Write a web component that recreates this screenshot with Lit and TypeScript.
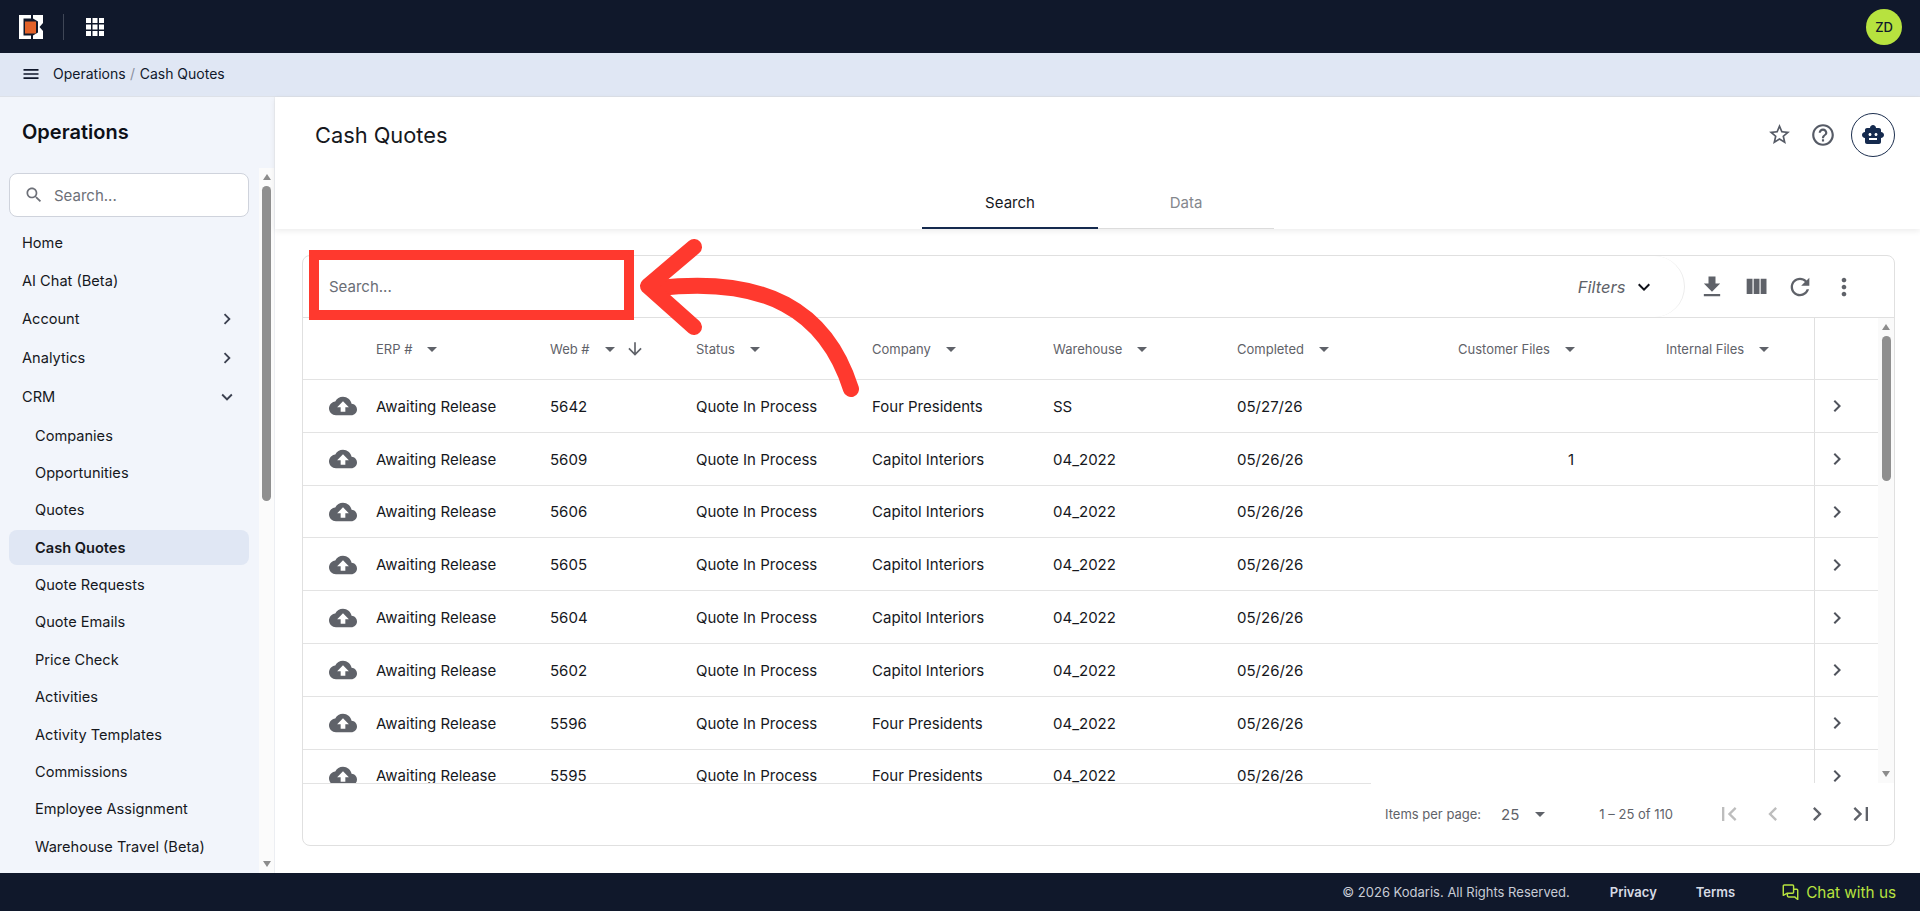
import { LitElement, html, css, svg } from "lit";
import { customElement } from "lit/decorators.js";

const P: Record<string, string> = {
  menu: "M3 18h18v-2H3v2zm0-5h18v-2H3v2zm0-7v2h18V6H3z",
  search: "M15.5 14h-.79l-.28-.27C15.41 12.59 16 11.11 16 9.5 16 5.91 13.09 3 9.5 3S3 5.91 3 9.5 5.91 16 9.5 16c1.61 0 3.09-.59 4.23-1.57l.27.28v.79l5 4.99L20.49 19l-4.99-5zm-6 0C7.01 14 5 11.99 5 9.5S7.01 5 9.5 5 14 7.01 14 9.5 11.99 14 9.5 14z",
  right: "M10 6L8.59 7.41 13.17 12l-4.58 4.59L10 18l6-6z",
  left: "M15.41 7.41L14 6l-6 6 6 6 1.41-1.41L10.83 12z",
  down: "M16.59 8.59L12 13.17 7.41 8.59 6 10l6 6 6-6z",
  star: "M22 9.24l-7.19-.62L12 2 9.19 8.63 2 9.24l5.46 4.73L5.82 21 12 17.27 18.18 21l-1.63-7.03L22 9.24zM12 15.4l-3.76 2.27 1-4.28-3.32-2.88 4.38-.38L12 6.1l1.71 4.04 4.38.38-3.32 2.88 1 4.28L12 15.4z",
  help: "M11 18h2v-2h-2v2zm1-16C6.48 2 2 6.48 2 12s4.48 10 10 10 10-4.48 10-10S17.52 2 12 2zm0 18c-4.41 0-8-3.59-8-8s3.59-8 8-8 8 3.59 8 8-3.59 8-8 8zm0-14c-2.21 0-4 1.79-4 4h2c0-1.1.9-2 2-2s2 .9 2 2c0 2-3 1.75-3 5h2c0-2.25 3-2.5 3-5 0-2.21-1.79-4-4-4z",
  robot: "M20 9V7c0-1.1-.9-2-2-2h-3c0-1.66-1.34-3-3-3S9 3.34 9 5H6c-1.1 0-2 .9-2 2v2c-1.66 0-3 1.34-3 3s1.34 3 3 3v4c0 1.1.9 2 2 2h12c1.1 0 2-.9 2-2v-4c1.66 0 3-1.34 3-3s-1.34-3-3-3zM7.5 11.5C7.5 10.67 8.17 10 9 10s1.5.67 1.5 1.5S9.83 13 9 13s-1.5-.67-1.5-1.5zM16 17H8v-2h8v2zm-1-4c-.83 0-1.5-.67-1.5-1.5S14.17 10 15 10s1.5.67 1.5 1.5S15.83 13 15 13z",
  download: "M19 9h-4V3H9v6H5l7 7 7-7zM5 18v2h14v-2H5z",
  columns: "M10 18h5V5h-5v13zm-6 0h5V5H4v13zM16 5v13h5V5h-5z",
  refresh: "M17.65 6.35C16.2 4.9 14.21 4 12 4c-4.42 0-7.99 3.58-7.99 8s3.57 8 7.99 8c3.73 0 6.84-2.55 7.73-6h-2.08c-.82 2.33-3.04 4-5.65 4-3.31 0-6-2.69-6-6s2.69-6 6-6c1.66 0 3.14.69 4.22 1.78L13 11h7V4l-2.35 2.35z",
  more: "M12 8c1.1 0 2-.9 2-2s-.9-2-2-2-2 .9-2 2 .9 2 2 2zm0 2c-1.1 0-2 .9-2 2s.9 2 2 2 2-.9 2-2-.9-2-2-2zm0 6c-1.1 0-2 .9-2 2s.9 2 2 2 2-.9 2-2-.9-2-2-2z",
  cloud: "M19.35 10.04C18.67 6.59 15.64 4 12 4 9.11 4 6.6 5.64 5.35 8.04 2.34 8.36 0 10.91 0 14c0 3.31 2.69 6 6 6h13c2.76 0 5-2.24 5-5 0-2.64-2.05-4.78-4.65-4.96zM14 13v4h-4v-4H7l5-5 5 5h-3z",
  sort: "M20 12l-1.41-1.41L13 16.17V4h-2v12.17l-5.58-5.59L4 12l8 8 8-8z",
  first: "M18.41 16.59L13.82 12l4.59-4.59L17 6l-6 6 6 6zM6 6h2v12H6z",
  last: "M5.59 7.41L10.18 12l-4.59 4.59L7 18l6-6-6-6zM16 6h2v12h-2z",
};

const icon = (n: string, size: number, cls = "") => html`<svg class=${cls} width=${size} height=${size} viewBox="0 0 24 24" fill="currentColor">${svg`<path d=${P[n]}></path>`}</svg>`;

const NAV: [string, number, string?][] = [
  ["Home", 0], ["AI Chat (Beta)", 0], ["Account", 0, "right"], ["Analytics", 0, "right"], ["CRM", 0, "down"],
  ["Companies", 1], ["Opportunities", 1], ["Quotes", 1], ["Cash Quotes", 2], ["Quote Requests", 1], ["Quote Emails", 1],
  ["Price Check", 1], ["Activities", 1], ["Activity Templates", 1], ["Commissions", 1], ["Employee Assignment", 1], ["Warehouse Travel (Beta)", 1],
];

const COLS = ["ERP #", "Web #", "Status", "Company", "Warehouse", "Completed", "Customer Files", "Internal Files"];
const ROWS: [string, string, string, string, string?][] = [
  ["5642", "Four Presidents", "SS", "05/27/26"],
  ["5609", "Capitol Interiors", "04_2022", "05/26/26", "1"],
  ["5606", "Capitol Interiors", "04_2022", "05/26/26"],
  ["5605", "Capitol Interiors", "04_2022", "05/26/26"],
  ["5604", "Capitol Interiors", "04_2022", "05/26/26"],
  ["5602", "Capitol Interiors", "04_2022", "05/26/26"],
  ["5596", "Four Presidents", "04_2022", "05/26/26"],
  ["5595", "Four Presidents", "04_2022", "05/26/26"],
];

const APP_DOTS = [0, 6.5, 13];

@customElement("app-root")
export class AppRoot extends LitElement {
  static styles = css`
    :host { display: flex; flex-direction: column; height: 100vh; overflow: hidden; position: relative; font-family: Inter, "Noto Sans", sans-serif; font-size: 14px; color: #16181d; background: #fff; }
    svg { display: block; flex: none; }
    .top { height: 53px; flex: none; background: #10182b; display: flex; align-items: center; padding: 0 18px 0 18px; }
    .logo { width: 25px; height: 24px; }
    .divider { width: 1px; height: 26px; background: #3f4656; margin: 0 22px 0 20px; }
    .apps { color: #fff; }
    .avatar { margin-left: auto; width: 36px; height: 36px; border-radius: 50%; background: #b7e23f; color: #10182b; font-size: 13px; font-weight: 500; display: flex; align-items: center; justify-content: center; }
    .crumb { height: 44px; flex: none; box-sizing: border-box; background: #e0e7f4; display: flex; align-items: center; padding: 0 0 3px 21px; box-shadow: inset 0 -1px 0 #dde1e8; color: #10182b; }
    .crumb .ham { margin-right: 12px; }
    .crumb .sep { color: #8a90a0; margin: 0 4.5px; }
    .middle { flex: 1; min-height: 0; display: flex; }
    .side { width: 275px; flex: none; display: flex; border-right: 1px solid #eceef2; box-sizing: border-box; }
    .side-main { width: 259px; flex: none; background: #f2f5fb; display: flex; flex-direction: column; overflow: hidden; }
    .side-title { font-size: 20px; font-weight: 600; color: #0d1017; padding: 22px 0 0 22px; line-height: 26px; height: 54px; flex: none; box-sizing: content-box; }
    .side-search { margin: 0 10px 0 9px; height: 44px; flex: none; box-sizing: border-box; border: 1px solid #cfd3dc; border-radius: 8px; background: #fff; display: flex; align-items: center; color: #6d7078; padding-left: 14px; gap: 10px; font-size: 15px; }
    .side-search svg { color: #6d7078; }
    .nav { padding: 7.5px 10px 0 9px; display: flex; flex-direction: column; font-size: 14.6px; }
    .nav-item { height: 37.4px; flex: none; display: flex; align-items: center; padding: 0 11px 0 13px; color: #16181d; }
    .nav-item.exp { height: 39.2px; }
    .nav-item.sub { padding-left: 26px; }
    .nav-item.active { background: #e0e7f4; border-radius: 8px; font-weight: 600; height: 35px; margin: 1.2px 0; }
    .nav-item svg { margin-left: auto; color: #3c4150; }
    .track { flex: 1; background: #fbfbfb; display: flex; flex-direction: column; align-items: center; }
    .side-track-top { flex: none; align-self: stretch; background: #f2f5fb; height: 71px; }
    .arrow-up { width: 0; height: 0; border-left: 4.5px solid transparent; border-right: 4.5px solid transparent; border-bottom: 6px solid #8c8c8c; margin: 6px 0 6px; flex: none; }
    .arrow-dn { width: 0; height: 0; border-left: 4.5px solid transparent; border-right: 4.5px solid transparent; border-top: 6px solid #8c8c8c; margin-top: auto; margin-bottom: 6px; flex: none; }
    .thumb { width: 9px; border-radius: 5px; background: #8f8f8f; flex: none; }
    .thumb.side-t { height: 315px; }
    .thumb.tbl-t { height: 145px; }
    .main { flex: 1; min-width: 0; display: flex; flex-direction: column; }
    .head { height: 132px; flex: none; position: relative; z-index: 1; background: #fff; box-shadow: 0 2px 6px rgba(0,0,0,.08); display: flex; flex-direction: column; }
    .head-top { height: 88px; flex: none; display: flex; align-items: center; padding: 0 25px 13px 40px; box-sizing: border-box; }
    .head-top h1 { margin: 0; font-size: 21.8px; font-weight: 400; color: #16181d; flex: 1; }
    .hicon { color: #565b66; margin-right: 18px; }
    .hicon.q { margin-right: 15px; }
    .bot { width: 44px; height: 44px; box-sizing: border-box; border: 1.5px solid #1d2f4f; border-radius: 50%; display: flex; align-items: center; justify-content: center; color: #152a4e; }
    .tabs { display: flex; margin-left: 647px; height: 44px; font-size: 15px; }
    .tab { width: 176px; display: flex; align-items: center; justify-content: center; border-bottom: 1px solid #dcdcdc; box-sizing: border-box; color: #84878d; padding-bottom: 9px; }
    .tab.on { color: #16181d; border-bottom: 2px solid #152a4e; padding-bottom: 8px; }
    .content { flex: 1; min-height: 0; padding: 26px 25px 27px 27px; }
    .card { height: 100%; box-sizing: border-box; border: 1px solid #e0e0e0; border-radius: 8px; display: flex; flex-direction: column; overflow: hidden; }
    .bar { height: 62px; flex: none; display: flex; align-items: center; border-bottom: 1px solid #e0e0e0; box-sizing: border-box; }
    .bar-search { width: 1382px; height: 100%; box-sizing: border-box; border-right: 1px solid #ececec; border-radius: 0 31px 31px 0; display: flex; align-items: center; padding: 0 28px 0 26px; color: #6a6e76; font-size: 15px; }
    .filters { margin-left: auto; font-style: italic; color: #5e6269; display: flex; align-items: center; gap: 6.5px; font-size: 16.5px; }
    .filters svg { color: #10121a; }
    .tools { display: flex; color: #5f6269; padding-left: 13px; gap: 16px; }
    .tbl { flex: 1; min-height: 0; display: flex; }
    .tbl-body { width: 1575px; flex: none; overflow: hidden; }
    .row { display: grid; grid-template-columns: 73px 174px 146px 176px 181px 184px 221px 208px 148px 64px; align-items: center; height: 52.8px; box-sizing: border-box; border-bottom: 1px solid #e3e3e3; font-size: 15px; }
    .row > div { display: flex; align-items: center; height: 100%; padding-top: 1px; box-sizing: border-box; }
    .row.hd { height: 62px; font-size: 13px; color: #5f6269; }
    .row .ic { justify-content: flex-end; padding-right: 19px; color: #5f6269; }
    .row .end { border-left: 1px solid #e0e0e0; padding-left: 10px; color: #50545d; }
    .caret { width: 0; height: 0; border-left: 5px solid transparent; border-right: 5px solid transparent; border-top: 5.5px solid #5f6269; margin-left: 15px; }
    .sorti { margin-left: 10px; color: #5f6269; }
    .row .cnum { padding-left: 110px; }
    .tbl-track { flex: 1; background: #fafafa; display: flex; flex-direction: column; align-items: center; }
    .pager { height: 62px; flex: none; display: flex; align-items: center; font-size: 13px; color: #5f6269; padding: 0 0 0 1082px; background: linear-gradient(#e3e3e3,#e3e3e3) 0 0/1068px 1px no-repeat; box-sizing: border-box; }
    .pager .sz { font-size: 15px; margin-left: 20px; }
    .pager .caret { margin-left: 16px; }
    .pager .range { margin-left: 54px; }
    .pager .btns { margin-left: 42px; display: flex; gap: 16px; }
    .pager .off { color: #bdbdbd; }
    .foot { height: 38px; flex: none; background: #10182b; display: flex; align-items: center; justify-content: flex-end; padding-right: 24px; color: #c8ccd6; font-size: 13px; }
    .foot b { font-weight: 600; color: #d7dbe5; }
    .foot .priv { margin-left: 40px; }
    .foot .terms { margin-left: 39px; }
    .chat { margin-left: 47px; color: #b7e23f; font-size: 15.3px; display: flex; align-items: center; gap: 7px; }
    .annot { position: absolute; left: 0; top: 0; pointer-events: none; }
  `;

  render() {
    return html`
      <div class="top">
        <svg class="logo" viewBox="0 0 25 24">
          <path fill="#fff" d="M1 0h12v3.500H5.500v17H13V24H1zM15 0H25V8L21.500 12H20V6.500L15 3.500zM15 24H25V16L21.500 12H20V17.500L15 20.500z"></path>
          <rect x="7" y="6.500" width="11" height="12" fill="#e2622a"></rect>
        </svg>
        <div class="divider"></div>
        <svg class="apps" width="18" height="18" viewBox="0 0 18 18" fill="currentColor">
          ${APP_DOTS.map((y) => APP_DOTS.map((x) => svg`<rect x=${x} y=${y} width="5" height="5"></rect>`))}
        </svg>
        <div class="avatar">ZD</div>
      </div>
      <div class="crumb">
        <span class="ham">${icon("menu", 20)}</span>
        <span>Operations</span><span class="sep">/</span><span>Cash Quotes</span>
      </div>
      <div class="middle">
        <div class="side">
          <div class="side-main">
            <div class="side-title">Operations</div>
            <div class="side-search">${icon("search", 20)}<span>Search...</span></div>
            <div class="nav">
              ${NAV.map(([t, k, ic]) => html`<div class="nav-item ${k ? "sub" : ""} ${k === 2 ? "active" : ""} ${ic ? "exp" : ""}">${t}${ic ? icon(ic, 22) : ""}</div>`)}
            </div>
          </div>
          <div class="track">
            <div class="side-track-top"></div>
            <div class="arrow-up"></div>
            <div class="thumb side-t"></div>
            <div class="arrow-dn"></div>
          </div>
        </div>
        <div class="main">
          <div class="head">
            <div class="head-top">
              <h1>Cash Quotes</h1>
              <span class="hicon">${icon("star", 25)}</span>
              <span class="hicon q">${icon("help", 26)}</span>
              <div class="bot">${icon("robot", 24)}</div>
            </div>
            <div class="tabs"><div class="tab on">Search</div><div class="tab">Data</div></div>
          </div>
          <div class="content">
            <div class="card">
              <div class="bar">
                <div class="bar-search">
                  <span>Search...</span>
                  <span class="filters">Filters ${icon("down", 24)}</span>
                </div>
                <div class="tools">${icon("download", 28)}${icon("columns", 28)}${icon("refresh", 28)}${icon("more", 28)}</div>
              </div>
              <div class="tbl">
                <div class="tbl-body">
                  <div class="row hd">
                    <div></div>
                    ${COLS.map((c) => html`<div>${c}<span class="caret"></span>${c === "Web #" ? html`<span class="sorti">${icon("sort", 20)}</span>` : ""}</div>`)}
                    <div class="end"></div>
                  </div>
                  ${ROWS.map((r) => html`<div class="row">
                    <div class="ic">${icon("cloud", 28)}</div>
                    <div>Awaiting Release</div><div>${r[0]}</div><div>Quote In Process</div><div>${r[1]}</div><div>${r[2]}</div><div>${r[3]}</div>
                    <div class="cnum">${r[4] ?? ""}</div><div></div>
                    <div class="end">${icon("right", 24)}</div>
                  </div>`)}
                </div>
                <div class="tbl-track">
                  <div class="arrow-up"></div>
                  <div class="thumb tbl-t"></div>
                  <div class="arrow-dn"></div>
                </div>
              </div>
              <div class="pager">
                <span>Items per page:</span><span class="sz">25</span><span class="caret"></span>
                <span class="range">1 – 25 of 110</span>
                <span class="btns">
                  <span class="off">${icon("first", 28)}</span><span class="off">${icon("left", 28)}</span>
                  <span>${icon("right", 28)}</span><span>${icon("last", 28)}</span>
                </span>
              </div>
            </div>
          </div>
        </div>
      </div>
      <div class="foot">
        <span>© 2026 Kodaris. All Rights Reserved.</span>
        <b class="priv">Privacy</b><b class="terms">Terms</b>
        <span class="chat">
          <svg width="17" height="16" viewBox="0 0 16 15.500" fill="none" stroke="currentColor" stroke-width="1.4" stroke-linejoin="round"><path d="M2 1h8a1 1 0 0 1 1 1v6a1 1 0 0 1-1 1H4.500L1 11V2a1 1 0 0 1 1-1z"></path><path d="M11 5h3a1 1 0 0 1 1 1v9l-3-2.500H6a1 1 0 0 1-1-1V9"></path></svg>
          Chat with us
        </span>
      </div>
      <svg class="annot" width="1920" height="911" viewBox="0 0 1920 911" fill="none" stroke="#ff392e">
        <rect x="314" y="255" width="315" height="60" stroke-width="10"></rect>
        <path d="M851 389C826 310 765 276 658 288" stroke-width="16" stroke-linecap="round"></path>
        <path d="M694 247L648 286L694 327" stroke-width="16" stroke-linecap="round" stroke-linejoin="round"></path>
      </svg>
    `;
  }
}
